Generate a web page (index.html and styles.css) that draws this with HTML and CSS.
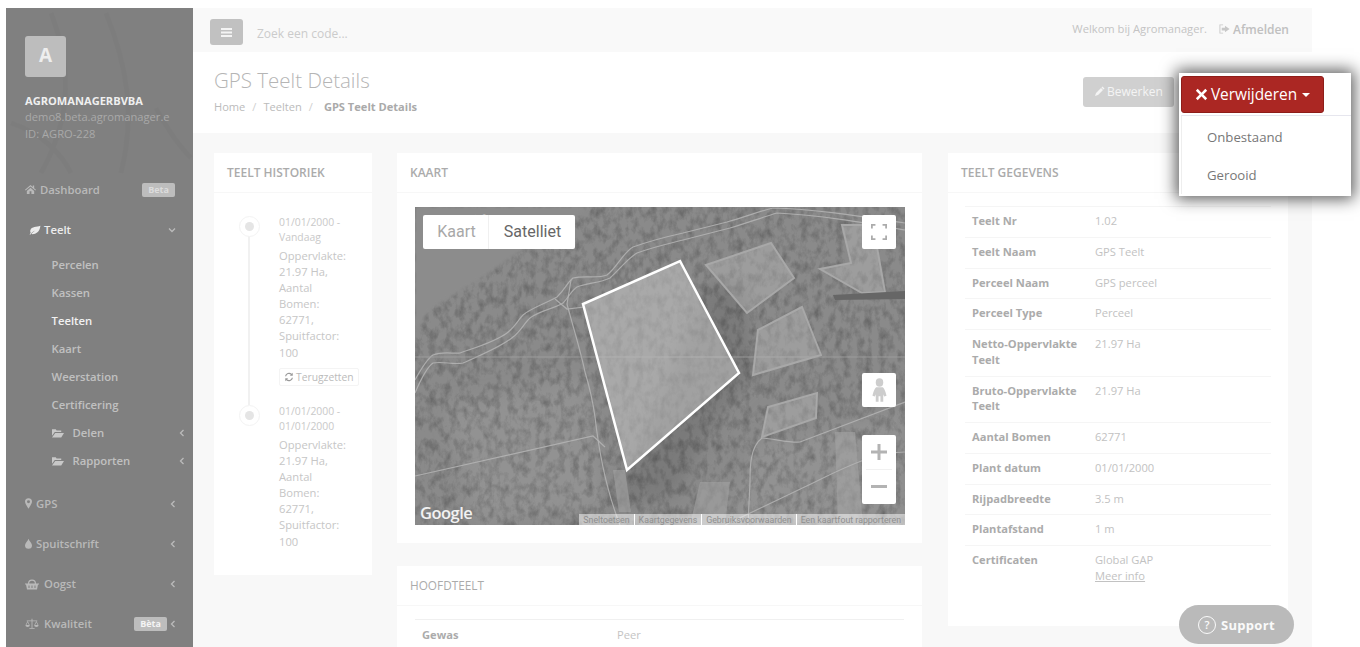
FILE: index.html
```html
<!DOCTYPE html>
<html lang="nl">
<head>
<meta charset="utf-8">
<title>GPS Teelt Details</title>
<link rel="stylesheet" href="styles.css">
</head>
<body>
<div class="app">
  <aside class="sidebar">
    <svg class="side-deco" viewBox="0 0 187 170" aria-hidden="true"><path d="M45 5C70 70 60 120 35 165M100 5c20 50 30 100 15 160M5 115c30 10 50 30 60 50M150 100c10 20 25 40 35 50"/></svg>
    <div class="profile">
      <div class="avatar">A</div>
      <div class="org">AGROMANAGERBVBA</div>
      <div class="org-sub">demo8.beta.agromanager.e</div>
      <div class="org-sub">ID: AGRO-228</div>
    </div>
    <nav>
      <div class="item">
        <svg class="ic" viewBox="0 0 12 12"><path d="M6 1 0 6.2l.7.8L6 2.6 11.300 7l.7-.8-2-1.700V1.500H8.500v1.700zM2 7.500V11h3V8h2v3h3V7.500L6 4z"/></svg>
        <span class="lbl">Dashboard</span><span class="badge">Beta</span>
      </div>
      <div class="active-group">
        <div class="item item-active">
          <svg class="ic ic-leaf" viewBox="0 0 14 12"><path d="M13.500 1C9 3 3 1.500 1.500 6c-.4 1.300-.2 2.400.3 3.200C1.200 10 .8 10.600.5 11.300l.9.400c.6-1.300 2-3.300 6-5-2.700 1.700-4 3-4.700 4.200C7 11.500 12.500 9.500 13.500 1z"/></svg>
          <span class="lbl">Teelt</span>
          <svg class="chev chev-down" viewBox="0 0 8 8"><path d="M1 2.500 4 5.500 7 2.500"/></svg>
        </div>
        <a class="sub">Percelen</a>
        <a class="sub">Kassen</a>
        <a class="sub sub-cur">Teelten</a>
        <a class="sub">Kaart</a>
        <a class="sub">Weerstation</a>
        <a class="sub">Certificering</a>
        <a class="sub sub-f">
          <svg class="folder" viewBox="0 0 13 10"><path d="M0 1h4l1 1.200h5V4H3L0 8zM3.500 5H13l-3 5H0z"/></svg>
          <span class="lbl">Delen</span>
          <svg class="chev chev-sub" viewBox="0 0 8 8"><path d="M5.500 1 2.500 4l3 3"/></svg>
        </a>
        <a class="sub sub-f">
          <svg class="folder" viewBox="0 0 13 10"><path d="M0 1h4l1 1.200h5V4H3L0 8zM3.500 5H13l-3 5H0z"/></svg>
          <span class="lbl">Rapporten</span>
          <svg class="chev chev-sub" viewBox="0 0 8 8"><path d="M5.500 1 2.500 4l3 3"/></svg>
        </a>
      </div>
      <div class="item">
        <svg class="ic ic-sm" viewBox="0 0 8 12"><path fill-rule="evenodd" d="M4 0a4 4 0 0 0-4 4c0 2 2.500 5.500 4 8 1.500-2.500 4-6 4-8a4 4 0 0 0-4-4zm0 2.300a1.700 1.700 0 1 1 0 3.400 1.700 1.700 0 0 1 0-3.400z"/></svg>
        <span class="lbl">GPS</span>
        <svg class="chev" viewBox="0 0 8 8"><path d="M5.500 1 2.500 4l3 3"/></svg>
      </div>
      <div class="item">
        <svg class="ic ic-sm" viewBox="0 0 8 12"><path d="M4 .5C3.300 3 0 5.500 0 8a4 4 0 0 0 8 0C8 5.500 4.700 3 4 .5z"/></svg>
        <span class="lbl">Spuitschrift</span>
        <svg class="chev" viewBox="0 0 8 8"><path d="M5.500 1 2.500 4l3 3"/></svg>
      </div>
      <div class="item">
        <svg class="ic ic-w" viewBox="0 0 14 12"><path d="M0 5.500h14v1h-1l-1 5H2l-1-5H0zM3 5.500a4 4 0 0 1 8 0h-1.200a2.800 2.800 0 0 0-5.600 0zM3.500 7.500v2.500h1V7.500zm3 0v2.500h1V7.500zm3 0v2.500h1V7.500z"/></svg>
        <span class="lbl">Oogst</span>
        <svg class="chev" viewBox="0 0 8 8"><path d="M5.500 1 2.500 4l3 3"/></svg>
      </div>
      <div class="item">
        <svg class="ic ic-w" viewBox="0 0 16 12"><path d="M7.500 0h1v10.500H11v1H5v-1h2.500zM2 2h12v.8H2zM3 2.500 .5 7.500a2.500 2 0 0 0 5 0zm0 1.500 1.500 3h-3zM13 2.500l-2.500 5a2.500 2 0 0 0 5 0zm0 1.500 1.500 3h-3z"/></svg>
        <span class="lbl">Kwaliteit</span><span class="badge badge-strong">Bèta</span>
        <svg class="chev" viewBox="0 0 8 8"><path d="M5.500 1 2.500 4l3 3"/></svg>
      </div>
    </nav>
  </aside>

  <main class="main">
    <header class="topbar">
      <button class="menu-btn" aria-label="Menu"><svg viewBox="0 0 11 9"><path d="M0 0h11v2H0zM0 3.500h11v2H0zM0 7h11v2H0z"/></svg></button>
      <span class="search">Zoek een code...</span>
      <span class="welcome">Welkom bij Agromanager.</span>
      <span class="logout">
        <svg viewBox="0 0 12 10"><path d="M4.500 0v1H1.500v8h3v1H.5V0zM6.500 1.500 11.500 5l-5 3.500V6.500H3v-3h3.500z"/></svg>
        Afmelden
      </span>
    </header>

    <section class="titlebar">
      <div>
        <h1>GPS Teelt Details</h1>
        <div class="crumbs"><span>Home</span><i>/</i><span>Teelten</span><i>/</i><b>GPS Teelt Details</b></div>
      </div>
      <button class="edit-btn"><svg viewBox="0 0 10 10"><path d="M7.500.5 9.500 2.500 8.500 3.500 6.500 1.500zM6 2l2 2-5 5-3 1 1-3z"/></svg>Bewerken</button>
    </section>

    <section class="content">
      <div class="panel history">
        <div class="panel-head">TEELT HISTORIEK</div>
        <div class="timeline">
          <div class="tl-entry">
            <span class="tl-dot"></span>
            <div class="tl-date">01/01/2000 - Vandaag</div>
            <div class="tl-text">Oppervlakte: 21.97 Ha, Aantal Bomen: 62771, Spuitfactor: 100</div>
            <span class="restore"><svg viewBox="0 0 12 12"><path d="M10.500 1v3.500H7l1.300-1.300A3.500 3.500 0 0 0 2.600 5H1.200a4.900 4.900 0 0 1 8.100-2.800zM1.500 11V7.500H5L3.700 8.800A3.500 3.500 0 0 0 9.400 7h1.400a4.900 4.900 0 0 1-8.100 2.800z"/></svg>Terugzetten</span>
          </div>
          <div class="tl-entry tl-last">
            <span class="tl-dot"></span>
            <div class="tl-date">01/01/2000 - 01/01/2000</div>
            <div class="tl-text">Oppervlakte: 21.97 Ha, Aantal Bomen: 62771, Spuitfactor: 100</div>
          </div>
        </div>
      </div>

      <div class="mid">
        <div class="panel map-panel">
          <div class="panel-head">KAART</div>
          <div class="map">
            <svg class="map-img" viewBox="0 0 490 318" aria-hidden="true">
              <defs>
                <filter id="tx" x="0" y="0" width="100%" height="100%">
                  <feTurbulence type="fractalNoise" baseFrequency="0.14 0.09" numOctaves="4" seed="11"/>
                  <feColorMatrix type="matrix" values="0 0 0 0 0  0 0 0 0 0  0 0 0 0 0  1.500 0 0 0 -0.600"/>
                </filter>
                <filter id="blur1"><feGaussianBlur stdDeviation="8"/></filter>
                <filter id="blur2"><feGaussianBlur stdDeviation="1.500"/></filter>
              </defs>
              <rect width="490" height="318" fill="#8a8a8a"/>
              <path class="field-l" d="M30 200 170 170 190 300 60 318z" filter="url(#blur1)"/>
              <path class="field-l" d="M340 240 490 205V318H310z" filter="url(#blur1)"/>
              <path class="dark-b" d="M290 80 330 70 340 170 310 200 260 290 190 300 220 250z" filter="url(#blur1)"/>
              <rect width="490" height="318" filter="url(#tx)" opacity=".3"/>
              <path class="water" d="M0 0H172L165 6 102 46 68 70 18 100 0 122z" filter="url(#blur2)"/>
              <path class="patch" d="M198 263h12l6 42h-12zM285 275h30l-5 43h-35zM420 225h20l8 93h-25z"/>
              <path class="road" d="M0 173C6 162 12 152 18 148 28 144 38 147 45 146 62 140 80 135 92 126 100 120 104 112 108 108 118 100 132 96 142 90 150 82 152 76 158 71 170 68 182 72 192 68 202 60 208 46 218 40 235 34 250 30 268 26L312 15C330 10 345 4 358 1 400 2 450 10 490 16"/>
              <path class="road" d="M0 186C6 172 12 160 18 156 28 154 38 158 48 156 66 148 86 140 98 130 106 124 110 115 115 111 124 104 138 102 148 96 154 90 156 84 162 80 172 76 185 76 195 71 205 62 212 52 222 46 238 40 252 37 268 33L315 21C332 16 348 10 362 6 405 8 450 16 490 23"/>
              <path class="road" d="M152 97C158 120 166 145 170 165 176 185 178 195 180 210 184 245 192 285 205 318"/>
              <path class="road" d="M152 97 156 73M140 92l12 10 17-2"/>
              <path class="road" d="M0 269 178 229 190 240"/>
              <path class="road" d="M347 231C360 232 375 236 385 235L490 195"/>
              <path class="road" d="M347 231C335 240 335 260 335 275L333 318"/>
              <path class="road" d="M310 318 400 275C440 255 465 245 490 245"/>
              <path class="road thin" d="M0 150H490"/>
              <path class="plot" d="M291 58 356 36 379 71 332 106z"/>
              <path class="plot" d="M427 18H458L470 85 447 86 405 62 436 56z"/>
              <path class="plot" d="M387 100 406 148 338 168 343 123z"/>
              <path class="plot" d="M402 186 401 211 347 230 353 200z"/>
              <path class="main-plot" d="M265 54 324 166 212 263 168 97z"/>
              <path class="shadow-strip" d="M418 88 490 84V92L420 93z"/>
              <text class="street" x="52" y="19" transform="rotate(-20 52 19)">Sche</text>
            </svg>
            <div class="map-type"><span class="mt-off">Kaart</span><span class="mt-on">Satelliet</span></div>
            <button class="map-ctl fs" aria-label="Volledig scherm"><svg viewBox="0 0 18 18"><path d="M1 5V1h4M13 1h4v4M17 13v4h-4M5 17H1v-4"/></svg></button>
            <button class="map-ctl peg" aria-label="Street View"><svg viewBox="0 0 16 26"><ellipse cx="8" cy="4.500" rx="4" ry="4.500"/><path d="M4.500 9.500h7C13 10 15 16 15.500 18.500L13 19.500 12 17v8H9v-6H7v6H4V17L3 19.500 .5 18.500C1 16 3 10 4.500 9.500z"/></svg></button>
            <div class="map-zoom">
              <span class="z z-plus"><svg viewBox="0 0 16 16"><path d="M6.500 0h3v6.500H16v3H9.500V16h-3V9.500H0v-3h6.500z"/></svg></span>
              <span class="z"><svg viewBox="0 0 16 3"><path d="M0 0h16v3H0z"/></svg></span>
            </div>
            <span class="google">Google</span>
            <div class="attr"><span>Sneltoetsen</span><span>Kaartgegevens</span><span>Gebruiksvoorwaarden</span><span>Een kaartfout rapporteren</span></div>
          </div>
        </div>
        <div class="panel crop-panel">
          <div class="panel-head">HOOFDTEELT</div>
          <div class="crop-body">
            <div class="crop-row"><b>Gewas</b><span>Peer</span></div>
          </div>
        </div>
      </div>

      <div class="panel data-panel">
        <div class="panel-head">TEELT GEGEVENS</div>
        <div class="dt">
          <div class="dt-row"><b>Teelt Nr</b><span>1.02</span></div>
          <div class="dt-row"><b>Teelt Naam</b><span>GPS Teelt</span></div>
          <div class="dt-row"><b>Perceel Naam</b><span>GPS perceel</span></div>
          <div class="dt-row"><b>Perceel Type</b><span>Perceel</span></div>
          <div class="dt-row"><b>Netto-Oppervlakte Teelt</b><span>21.97 Ha</span></div>
          <div class="dt-row"><b>Bruto-Oppervlakte Teelt</b><span>21.97 Ha</span></div>
          <div class="dt-row"><b>Aantal Bomen</b><span>62771</span></div>
          <div class="dt-row"><b>Plant datum</b><span>01/01/2000</span></div>
          <div class="dt-row"><b>Rijpadbreedte</b><span>3.5 m</span></div>
          <div class="dt-row"><b>Plantafstand</b><span>1 m</span></div>
          <div class="dt-row"><b>Certificaten</b><span>Global GAP<br><u>Meer info</u></span></div>
        </div>
      </div>
    </section>
  </main>
</div>

<div class="spotlight">
  <button class="del-btn"><svg viewBox="0 0 12 12"><path d="M2.500.8 6 4.300 9.500.8l1.700 1.700L7.700 6l3.500 3.500-1.700 1.700L6 7.700l-3.500 3.500L.8 9.500 4.300 6 .8 2.500z"/></svg>Verwijderen<span class="caret"></span></button>
  <ul class="del-menu">
    <li>Onbestaand</li>
    <li>Gerooid</li>
  </ul>
</div>

<div class="support"><span class="q">?</span>Support</div>
</body>
</html>
```
FILE: styles.css
```css
* { box-sizing: border-box; }
html, body { height: 647px; margin: 0; overflow: hidden; background: #fff; }
body { font-family: "Open Sans", "Liberation Sans", sans-serif; font-size: 11.150px; color: #bbb; }
button { font-family: inherit; border: 0; padding: 0; }

.app { display: flex; width: 1306px; height: 639px; margin: 8px 0 0 6px; overflow: hidden; }

/* sidebar */
.sidebar { position: relative; flex: 0 0 187px; background: #808080; color: #bdbdbd; }
.side-deco { position: absolute; left: 0; top: 0; width: 187px; height: 170px; fill: none; stroke: #7c7c7c; stroke-width: 5; opacity: .5; }
.profile { position: relative; height: 162px; padding: 28px 0 0 19px; }
.avatar { width: 41px; height: 41px; margin-bottom: 16px; border-radius: 3px; background: #bdbdbd; color: #eee; font-size: 19px; font-weight: 700; line-height: 38px; text-align: center; }
.org { color: #efefef; font-size: 11.100px; font-weight: 700; line-height: 16px; }
.org-sub { color: #a9a9a9; font-size: 11.150px; line-height: 16.600px; white-space: nowrap; }
.item { display: flex; align-items: center; height: 40px; padding: 0 16px 1px 19px; font-size: 11.300px; font-weight: 600; color: #b9b9b9; }
.ic { flex: none; width: 11px; height: 11px; margin-right: 4px; fill: currentColor; }
.ic-sm { width: 7px; height: 11px; margin-right: 4px; }
.ic-w { width: 14px; height: 12px; margin-right: 5px; }
.lbl { flex: 1; white-space: nowrap; }
.chev { flex: none; width: 8px; height: 8px; fill: none; stroke: #bbb; stroke-width: 1.300; }
.badge { flex: none; width: 33px; height: 14px; margin-right: 2px; border-radius: 2px; background: #bdbdbd; color: #dcdcdc; font-size: 9px; font-weight: 700; line-height: 14px; text-align: center; }
.badge-strong { color: #f4f4f4; }
.active-group { height: 274px; }
.item-active { padding-left: 23px; color: #ececec; }
.ic-leaf { width: 12px; height: 10px; margin-right: 3px; }
.chev-down { margin-right: 1px; }
.sub { display: flex; align-items: center; height: 28.100px; padding-left: 45.500px; color: #c0c0c0; font-size: 11.300px; font-weight: 600; }
.sub-cur { color: #f1f1f1; }
.folder { flex: none; width: 12px; height: 10px; margin-right: 9px; fill: #c8c8c8; }
.chev-sub { margin-right: 7px; }

/* main */
.main { flex: 1; min-width: 0; display: flex; flex-direction: column; background: #f8f8f8; }
.topbar { display: flex; align-items: center; height: 44px; padding: 0 23px 0 17px; background: #f9f9f9; }
.menu-btn { display: flex; align-items: center; justify-content: center; width: 33px; height: 26px; margin-top: 4px; border-radius: 3px; background: #c1c1c1; }
.menu-btn svg { width: 11px; height: 9px; fill: #f4f4f4; }
.search { flex: 1; margin: 6px 0 0 14px; color: #cbcbcb; font-size: 12px; }
.welcome { margin: -4px 12px 0 0; color: #c4c4c4; font-size: 11.200px; }
.logout { display: flex; align-items: center; margin-top: -2px; color: #c0c0c0; font-size: 12px; font-weight: 600; }
.logout svg { width: 11px; height: 10px; margin-right: 3px; fill: #c8c8c8; }

.titlebar { display: flex; justify-content: space-between; height: 81px; padding: 14px 138px 0 21px; background: #fff; }
h1 { margin: 0; color: #b5b5b5; font-size: 20.500px; font-weight: 300; line-height: 28px; }
.crumbs { margin-top: 4px; display: flex; color: #bbb; font-size: 11.100px; line-height: 17px; }
.crumbs i { margin: 0 7px; color: #d0d0d0; font-style: normal; }
.crumbs b { margin-left: 4px; color: #aaa; font-weight: 700; }
.edit-btn { display: flex; align-items: center; justify-content: center; gap: 2px; width: 91px; height: 30px; margin-top: 11px; padding: 0 0 2px 1px; border-radius: 3px; background: #d0d0d0; color: #f4f4f4; font-size: 12px; }
.edit-btn svg { width: 10px; height: 10px; fill: #f4f4f4; }

.content { flex: 1; display: grid; grid-template-columns: 158px 525px 341px; column-gap: 25px; align-items: start; padding: 20px 0 0 21px; overflow: hidden; }
.panel { background: #fff; }
.panel-head { height: 40px; padding: 0 13px; border-bottom: 1px solid #f7f7f7; color: #ababab; font-size: 12px; font-weight: 600; line-height: 39px; }

/* history */
.history { height: 422px; }
.timeline { padding: 20px 0 0 0; }
.tl-entry { position: relative; padding: 0 22px 0 65px; height: 189px; }
.tl-entry::before { content: ""; position: absolute; left: 34px; top: 14px; height: 178px; width: 2px; background: #f1f1f1; }
.tl-last::before { display: none; }
.tl-dot { position: absolute; left: 25px; top: 3px; width: 21px; height: 21px; border: 1px solid #f3f3f3; border-radius: 50%; background: #fff; }
.tl-dot::after { content: ""; position: absolute; left: 5px; top: 5px; width: 9px; height: 9px; border-radius: 50%; background: #e5e5e5; }
.tl-date { padding-top: 2px; color: #c9c9c9; font-size: 10.400px; line-height: 15.300px; }
.tl-text { margin-top: 2px; color: #c6c6c6; font-size: 11.200px; line-height: 16.150px; }
.restore { position: absolute; left: 65px; top: 155px; display: flex; align-items: center; width: 80px; height: 18px; padding-left: 4px; border: 1px solid #f4f4f4; border-radius: 2px; color: #bbb; font-size: 10.300px; white-space: nowrap; }
.restore svg { width: 10px; height: 10px; margin-right: 2px; fill: #999; }

/* map */
.map-panel { height: 390px; }
.map { position: relative; width: 490px; height: 318px; margin: 14px 0 0 18px; overflow: hidden; }
.map-img { display: block; width: 490px; height: 318px; }
.water { fill: #8c8c8c; }
.field-l { fill: #929292; }
.dark-b { fill: #7a7a7a; }
.patch { fill: #a6a6a6; opacity: .55; }
.road { fill: none; stroke: #b5b5b5; stroke-width: 1.200; opacity: .85; }
.road.thin { stroke: #a0a0a0; stroke-width: 1; }
.plot { fill: rgba(200,200,200,.32); stroke: #a8a8a8; stroke-width: 2; }
.main-plot { fill: rgba(200,200,200,.5); stroke: #fff; stroke-width: 2.500; }
.shadow-strip { fill: #666; }
.street { fill: #c4c4c4; font-family: "Open Sans", sans-serif; font-size: 10px; }
.map-type { position: absolute; left: 8px; top: 8px; display: flex; height: 34px; border-radius: 2px; background: #fff; font-family: Roboto, "Open Sans", sans-serif; font-size: 16px; line-height: 34px; }
.mt-off { width: 66px; padding-left: 2px; border-right: 1px solid #f0f0f0; color: #a8a8a8; text-align: center; }
.mt-on { width: 86px; padding-left: 1px; color: #666; text-align: center; }
.map-ctl { position: absolute; left: 447px; display: flex; align-items: center; justify-content: center; width: 34px; height: 34px; border-radius: 2px; background: #fff; }
.fs { top: 8px; }
.fs svg { width: 16px; height: 16px; fill: none; stroke: #ababab; stroke-width: 2; }
.peg { top: 166px; }
.peg svg { width: 15px; height: 25px; fill: #cdcdcd; }
.map-zoom { position: absolute; left: 447px; top: 228px; width: 34px; height: 69px; border-radius: 2px; background: #fff; }
.z { display: flex; align-items: center; justify-content: center; height: 34.500px; }
.z svg { width: 16px; fill: #b3b3b3; }
.z-plus { margin: 0 4px; border-bottom: 1px solid #f1f1f1; }
.z-plus svg { height: 16px; }
.z:not(.z-plus) svg { height: 3px; }
.google { position: absolute; left: 5px; bottom: 1px; color: #f2f2f2; font-family: "Open Sans", sans-serif; font-size: 16.500px; font-weight: 600; line-height: 22px; letter-spacing: -.5px; }
.attr { position: absolute; right: 0; bottom: 0; display: flex; height: 11px; background: rgba(255,255,255,.5); color: #8f8f8f; font-family: Roboto, sans-serif; font-size: 8.800px; line-height: 12px; white-space: nowrap; }
.attr span { padding: 0 4px; border-left: 1px solid #fff; }
.attr span:first-child { border-left: 0; }
.mid { display: flex; flex-direction: column; gap: 22.500px; }
.crop-panel { height: 200px; }
.crop-panel .panel-head { font-size: 11.800px; font-weight: 400; }
.crop-body { padding: 13px 18px 0; }
.crop-row { display: flex; padding: 7px 7px; border-top: 1px solid #f0f0f0; line-height: 15.750px; }
.crop-row b { width: 195px; color: #ababab; font-weight: 700; }
.crop-row span { color: #c4c4c4; }

/* data */
.data-panel { height: 473px; margin-left: 1px; }
.dt { padding: 13px 17px 0; }
.dt-row { display: flex; padding: 6px 7px 8px; border-top: 1px solid #f5f5f5; line-height: 15.750px; }
.dt-row b { flex: 0 0 123px; padding-right: 8px; color: #ababab; font-weight: 700; }
.dt-row span { color: #c2c2c2; }

/* dropdown spotlight */
.spotlight { position: absolute; left: 1179px; top: 73px; width: 172px; height: 123px; padding: 3px 0 0 2px; background: #fff; box-shadow: 0 0 15px 3px rgba(0,0,0,.65); }
.del-btn { display: flex; align-items: center; justify-content: center; width: 143px; height: 37px; border: 1px solid #8e1d19; border-radius: 3px; background: #ab2723; color: #fff; font-size: 15.400px; }
.del-btn svg { width: 13px; height: 13px; margin-right: 3px; fill: #fff; }
.caret { width: 0; height: 0; margin-left: 5px; border-top: 4px solid #fff; border-left: 4px solid transparent; border-right: 4px solid transparent; }
.del-menu { margin: 2px 0 0; padding: 1.500px 0 0; border-top: 1px solid #e6e6ee; border-left: 1px solid #eee; list-style: none; color: #777; font-size: 13.200px; }
.del-menu li { height: 38px; padding-left: 25px; line-height: 38px; }

.support { position: absolute; left: 1179px; top: 605px; display: flex; align-items: center; width: 115px; height: 39px; padding-left: 19px; border-radius: 20px; background: #bababa; color: #fafafa; font-size: 13px; font-weight: 700; letter-spacing: .3px; }
.q { display: block; width: 18px; height: 18px; margin-right: 5px; border: 1.500px solid #fafafa; border-radius: 50%; font-size: 11px; font-weight: 600; line-height: 15px; text-align: center; letter-spacing: 0; }
```
